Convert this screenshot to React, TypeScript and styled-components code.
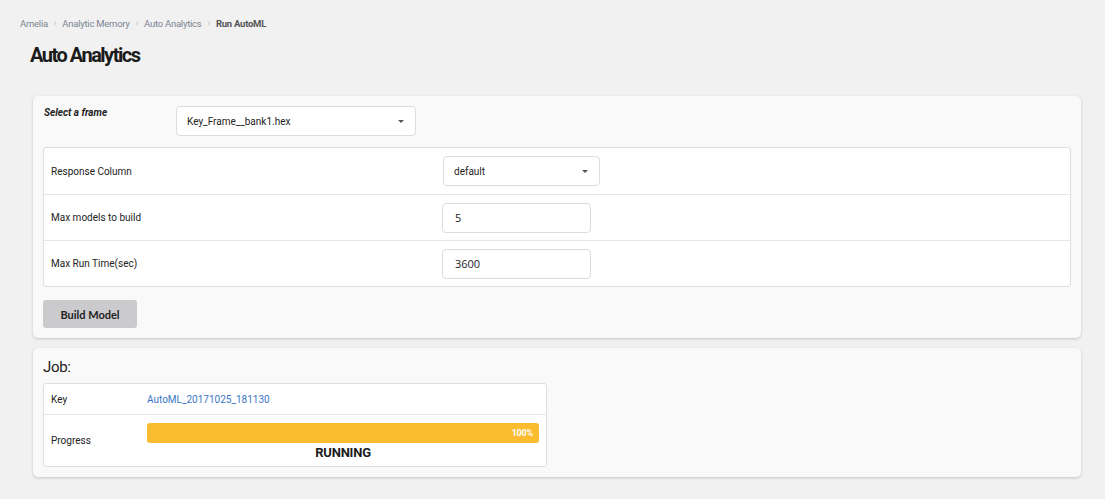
import React from "react";
import styled, { createGlobalStyle } from "styled-components";

const GlobalStyle = createGlobalStyle`
  body {
    margin: 0;
    background: #f1f1f1;
    font-family: Roboto, "Noto Sans", Arial, sans-serif;
    color: #222;
  }
`;

const Page = styled.div`
  padding: 16px 24px 20px 20px;
  width: 1105px;
  box-sizing: border-box;
`;

const Crumbs = styled.div`
  display: flex;
  align-items: center;
  gap: 6px;
  font-size: 9.5px;
  letter-spacing: -0.25px;
  color: #7c8591;
  height: 14px;
`;

const Crumb = styled.span<{ $active?: boolean }>`
  color: ${(p) => (p.$active ? "#555" : "#7c8591")};
  font-weight: ${(p) => (p.$active ? 700 : 400)};
`;

const Sep = styled.span`
  color: #b8bcc2;
  font-size: 9px;
`;

const Title = styled.h1`
  margin: 11px 0 0 10px;
  font-size: 20px;
  font-weight: 700;
  letter-spacing: -1.5px;
  color: #1b1b1b;
  line-height: 28px;
`;

const Card = styled.div<{ $top: number }>`
  margin: ${(p) => p.$top}px 0 0 13px;
  width: 1048px;
  box-sizing: border-box;
  background: #f9f9f9;
  border-radius: 5px;
  box-shadow: 0 1px 3px rgba(0, 0, 0, 0.18);
  padding: 10px;
`;

const FrameRow = styled.div`
  display: flex;
  align-items: flex-start;
  height: 41px;
`;

const FrameLabel = styled.div`
  width: 132px;
  padding: 1px 0 0 1px;
  font-size: 10px;
  font-weight: 700;
  font-style: italic;
  color: #222;
`;

const Select = styled.div<{ $width: number }>`
  width: ${(p) => p.$width}px;
  height: 30px;
  box-sizing: border-box;
  background: #fff;
  border: 1px solid #dcdcdc;
  border-radius: 4px;
  display: flex;
  align-items: center;
  justify-content: space-between;
  padding: 0 11px 0 10px;
  font-size: 10px;
  color: #222;
`;

const Caret = styled.span`
  width: 0;
  height: 0;
  border-left: 3px solid transparent;
  border-right: 3px solid transparent;
  border-top: 3px solid #555;
`;

const Table = styled.div<{ $width?: number }>`
  width: ${(p) => (p.$width ? `${p.$width}px` : "auto")};
  background: #fff;
  border: 1px solid #dedede;
  border-radius: 3px;
`;

const Row = styled.div<{ $height: number; $cols: string }>`
  display: grid;
  grid-template-columns: ${(p) => p.$cols};
  align-items: center;
  box-sizing: border-box;
  height: ${(p) => p.$height}px;
  padding: 0 7px;
  font-size: 10px;
  color: #222;
  & + & {
    border-top: 1px solid #e6e6e6;
  }
`;

const Input = styled.div`
  width: 149px;
  height: 30px;
  box-sizing: border-box;
  border: 1px solid #dcdcdc;
  border-radius: 4px;
  background: #fff;
  display: flex;
  align-items: center;
  padding-left: 12px;
  font-size: 11px;
  font-family: "Open Sans", Roboto, sans-serif;
`;

const Button = styled.button`
  margin-top: 13px;
  width: 94px;
  height: 28px;
  border: none;
  border-radius: 3px;
  background: #cbcbcd;
  font-family: Lato, Roboto, sans-serif;
  font-weight: 700;
  font-size: 11px;
  color: #222;
  padding: 0;
  display: block;
`;

const JobTitle = styled.div`
  font-size: 15px;
  line-height: 18px;
  letter-spacing: -0.3px;
  margin: 0 0 7px 0;
  color: #222;
`;

const Link = styled.a`
  color: #3a77c4;
  text-decoration: none;
`;

const ProgressCell = styled.div`
  display: flex;
  flex-direction: column;
  padding-top: 1px;
`;

const Bar = styled.div`
  height: 20px;
  border-radius: 3px;
  background: #fbbd2f;
  display: flex;
  align-items: center;
  justify-content: flex-end;
  padding-right: 6px;
  color: #fff;
  font-size: 9px;
  font-weight: 700;
  letter-spacing: -0.2px;
`;

const Status = styled.div`
  text-align: center;
  font-size: 13px;
  font-weight: 700;
  letter-spacing: -0.2px;
  color: #1b1b1b;
  margin-top: 2px;
`;

export default function App() {
  return (
    <Page>
      <GlobalStyle />
      <Crumbs>
        <Crumb>Amelia</Crumb>
        <Sep>›</Sep>
        <Crumb>Analytic Memory</Crumb>
        <Sep>›</Sep>
        <Crumb>Auto Analytics</Crumb>
        <Sep>›</Sep>
        <Crumb $active>Run AutoML</Crumb>
      </Crumbs>
      <Title>Auto Analytics</Title>

      <Card $top={27}>
        <FrameRow>
          <FrameLabel>Select a frame</FrameLabel>
          <Select $width={240}>
            Key_Frame__bank1.hex
            <Caret />
          </Select>
        </FrameRow>
        <Table>
          <Row $height={46} $cols="392px 1fr">
            <span>Response Column</span>
            <Select $width={157}>
              default
              <Caret />
            </Select>
          </Row>
          <Row $height={46} $cols="391px 1fr">
            <span>Max models to build</span>
            <Input>5</Input>
          </Row>
          <Row $height={46} $cols="391px 1fr">
            <span>Max Run Time(sec)</span>
            <Input>3600</Input>
          </Row>
        </Table>
        <Button>Build Model</Button>
      </Card>

      <Card $top={10}>
        <JobTitle>Job:</JobTitle>
        <Table $width={502}>
          <Row $height={30} $cols="96px 1fr">
            <span>Key</span>
            <Link href="#">AutoML_20171025_181130</Link>
          </Row>
          <Row $height={52} $cols="96px 392px">
            <span>Progress</span>
            <ProgressCell>
              <Bar>100%</Bar>
              <Status>RUNNING</Status>
            </ProgressCell>
          </Row>
        </Table>
      </Card>
    </Page>
  );
}
